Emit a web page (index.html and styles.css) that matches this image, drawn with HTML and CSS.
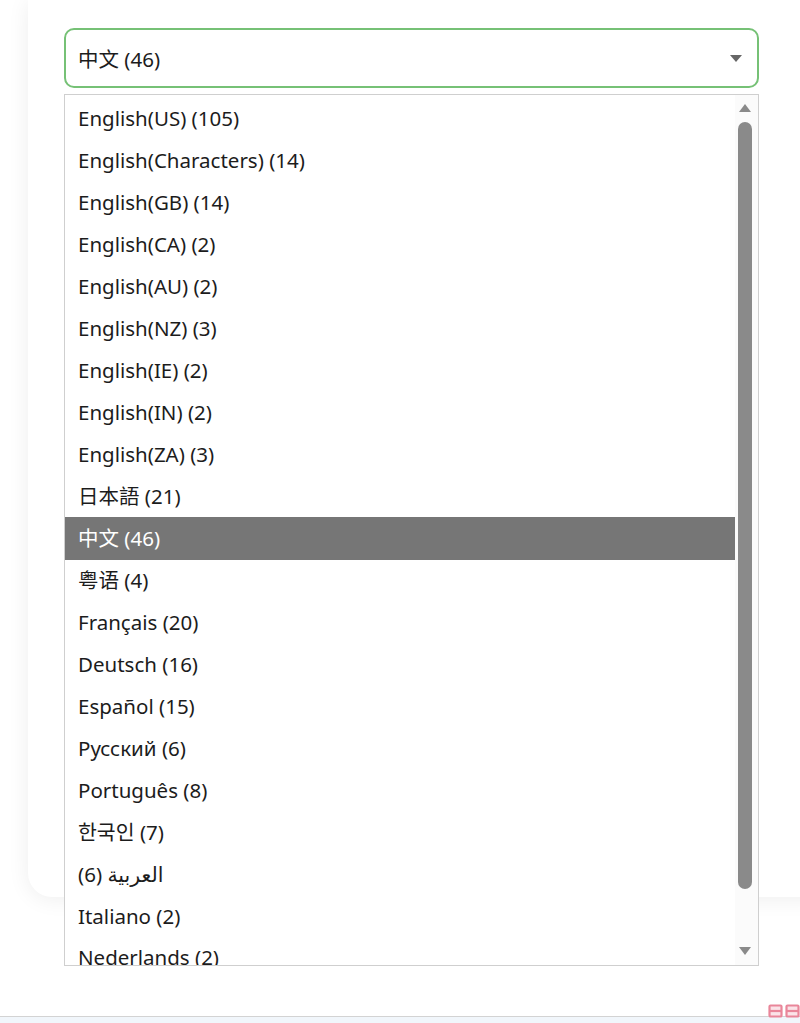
FILE: index.html
```html
<!DOCTYPE html>
<html lang="en">
<head>
<meta charset="utf-8">
<title>Language select</title>
<link rel="stylesheet" href="styles.css">
</head>
<body>
<div class="page">
  <div class="card">
    <div class="select-wrap">
      <div class="select">
        <span class="select-value">中文 (46)</span>
        <span class="select-arrow"></span>
      </div>
      <div class="listbox">
        <ul class="options">
          <li>English(US) (105)</li>
          <li>English(Characters) (14)</li>
          <li>English(GB) (14)</li>
          <li>English(CA) (2)</li>
          <li>English(AU) (2)</li>
          <li>English(NZ) (3)</li>
          <li>English(IE) (2)</li>
          <li>English(IN) (2)</li>
          <li>English(ZA) (3)</li>
          <li>日本語 (21)</li>
          <li class="selected">中文 (46)</li>
          <li>粤语 (4)</li>
          <li>Français (20)</li>
          <li>Deutsch (16)</li>
          <li>Español (15)</li>
          <li>Русский (6)</li>
          <li>Português (8)</li>
          <li>한국인 (7)</li>
          <li><span dir="ltr">(6)</span> <span lang="ar">العربية</span></li>
          <li>Italiano (2)</li>
          <li class="last">Nederlands (2)</li>
        </ul>
        <div class="scrollbar">
          <span class="sb-up"></span>
          <span class="sb-thumb"></span>
          <span class="sb-down"></span>
        </div>
      </div>
    </div>
  </div>
  <div class="footer">
    <div class="footer-line"></div>
    <svg class="footer-icon" width="32" height="14" viewBox="0 0 32 14">
      <g fill="#fbe3e8" stroke="#e9869a" stroke-width="2.2">
        <rect x="1.5" y="1.5" width="12" height="11" rx="1"/>
        <line x1="1.5" y1="7" x2="13.5" y2="7"/>
        <rect x="18.5" y="1.5" width="12" height="11" rx="1"/>
        <line x1="18.5" y1="7" x2="30.5" y2="7"/>
      </g>
    </svg>
  </div>
</div>
</body>
</html>
```

FILE: styles.css
```css
html, body {
  margin: 0;
  padding: 0;
  background: #ffffff;
  overflow: hidden;
}

.page {
  height: 1023px;
  display: flex;
  flex-direction: column;
  font-family: "Noto Sans", "Noto Sans CJK SC", "Noto Sans CJK KR", "DejaVu Sans", sans-serif;
  color: #1c1c1c;
}

.card {
  margin-left: 28px;
  margin-right: -40px;
  height: 897px;
  background: #ffffff;
  border-radius: 0 0 24px 24px;
  box-shadow: 0 2px 22px rgba(0, 0, 0, 0.07);
  padding: 28px 0 0 36px;
  box-sizing: border-box;
  position: relative;
  z-index: 1;
}

.select-wrap {
  position: relative;
  width: 695px;
}

.select {
  height: 60px;
  box-sizing: border-box;
  border: 2px solid #76c176;
  border-radius: 10px;
  display: flex;
  align-items: center;
  justify-content: space-between;
  padding: 0 15px 0 12px;
  font-size: 20.5px;
  background: #fff;
}

.select-arrow {
  width: 0;
  height: 0;
  border-left: 6px solid transparent;
  border-right: 6px solid transparent;
  border-top: 7px solid #666;
}

.listbox {
  position: absolute;
  top: 66px;
  left: 0;
  width: 695px;
  height: 872px;
  box-sizing: border-box;
  border: 1px solid #cfcfcf;
  background: #fff;
  overflow: hidden;
  z-index: 5;
}

.options {
  list-style: none;
  margin: 0;
  padding: 2px 23px 0 0;
}

.options li {
  height: 42px;
  line-height: 42px;
  padding-left: 13px;
  font-size: 20.5px;
  color: #1c1c1c;
  white-space: nowrap;
}

.options li.selected {
  background: #767676;
  color: #ffffff;
  height: 43px;
  margin-bottom: -1px;
}

.options li.last {
  line-height: 40px;
}

.scrollbar {
  position: absolute;
  top: 0;
  right: 0;
  bottom: 0;
  width: 23px;
  background: #fbfbfb;
}

.sb-up {
  position: absolute;
  top: 9px;
  left: 4px;
  width: 0;
  height: 0;
  border-left: 6px solid transparent;
  border-right: 6px solid transparent;
  border-bottom: 8px solid #8a8a8a;
}

.sb-thumb {
  position: absolute;
  top: 27px;
  left: 3px;
  width: 14px;
  height: 767px;
  background: #8a8a8a;
  border-radius: 7px;
}

.sb-down {
  position: absolute;
  bottom: 10px;
  left: 4px;
  width: 0;
  height: 0;
  border-left: 6px solid transparent;
  border-right: 6px solid transparent;
  border-top: 8px solid #8a8a8a;
}

.footer {
  margin-top: auto;
  height: 22px;
  position: relative;
  display: flex;
  flex-direction: column;
  justify-content: flex-end;
}

.footer-line {
  height: 6px;
  border-top: 1px solid #d3d3d3;
  background: #f1f6fb;
}

.footer-icon {
  position: absolute;
  right: 0;
  top: 3px;
}
```
